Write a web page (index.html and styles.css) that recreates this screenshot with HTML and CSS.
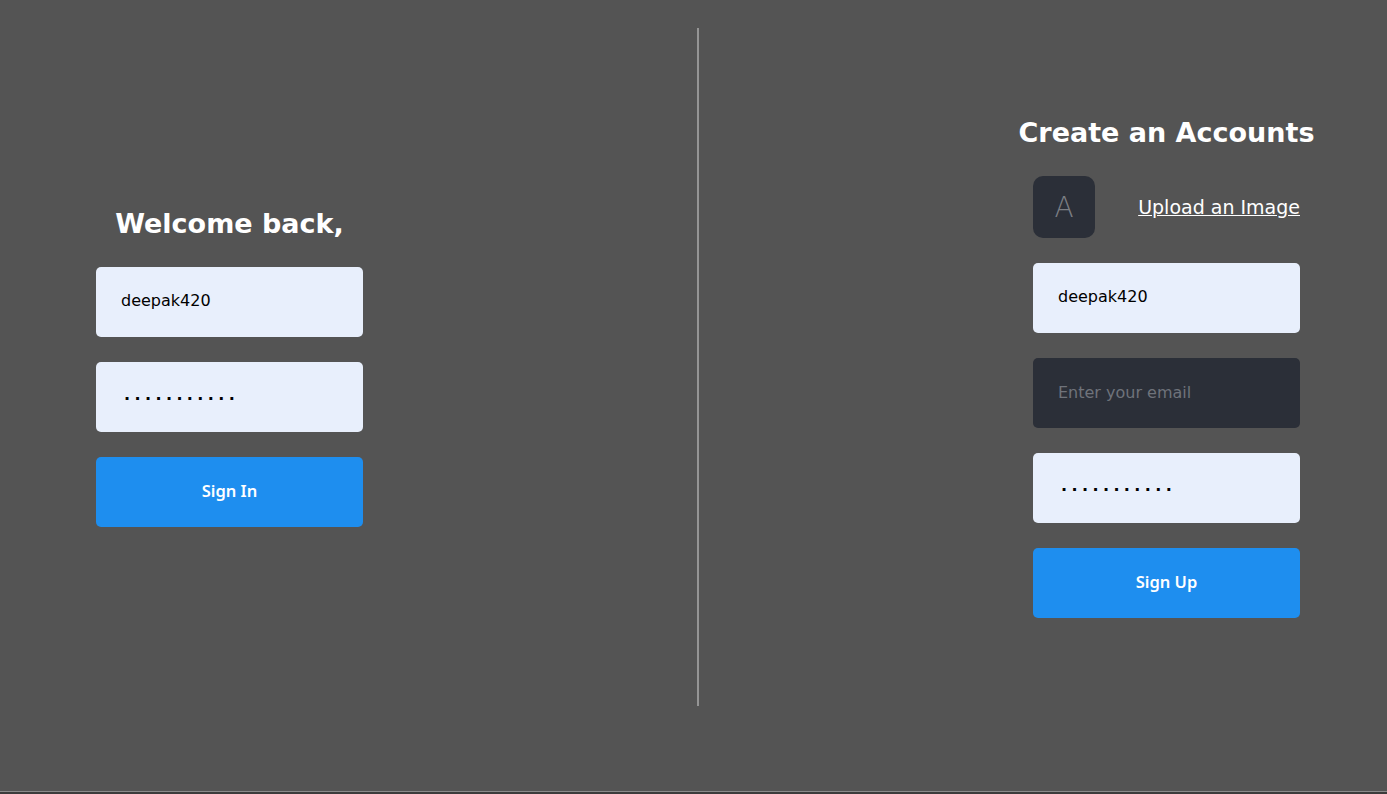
FILE: index.html
```html
<!DOCTYPE html>
<html lang="en">
<head>
<meta charset="utf-8">
<title>Auth</title>
<link rel="stylesheet" href="styles.css">
</head>
<body>
<main class="page">
  <section class="pane pane-left">
    <form class="form">
      <h1 class="title">Welcome back,</h1>
      <input class="field" type="text" value="deepak420">
      <input class="field field-pass" type="text" value="···········">
      <button class="btn" type="button">Sign In</button>
    </form>
  </section>
  <div class="divider"></div>
  <section class="pane pane-right">
    <form class="form">
      <h1 class="title">Create an Accounts</h1>
      <div class="avatar-row">
        <div class="avatar">A</div>
        <a class="upload" href="#">Upload an Image</a>
      </div>
      <input class="field" type="text" value="deepak420">
      <input class="field field-dark" type="text" placeholder="Enter your email">
      <input class="field field-pass" type="text" value="···········">
      <button class="btn" type="button">Sign Up</button>
    </form>
  </section>
</main>
<footer class="footer"></footer>
</body>
</html>
```
FILE: styles.css
```css
* { box-sizing: border-box; }
html, body { margin: 0; padding: 0; }
body {
  background: #545454;
  font-family: "DejaVu Sans", sans-serif;
  height: 794px;
  overflow: hidden;
}
.page {
  display: flex;
  align-items: stretch;
  height: 791px;
  padding: 28px 0 85px;
}
.pane {
  flex: 1;
  display: flex;
  align-items: center;
}
.pane-left { padding-left: 96px; }
.pane-right { justify-content: flex-end; padding-right: 87px; }
.divider {
  width: 2px;
  background: #959595;
}
.form {
  width: 267px;
  display: flex;
  flex-direction: column;
  gap: 25px;
}
.title {
  align-self: center;
  margin: 0 0 2px;
  font-size: 27px;
  font-weight: bold;
  color: #ffffff;
  text-align: center;
  line-height: 33px;
  white-space: nowrap;
}
.field {
  display: block;
  width: 100%;
  height: 70px;
  border: none;
  border-radius: 5px;
  background: #e8effc;
  padding: 0 25px 3px;
  font-family: "DejaVu Sans", sans-serif;
  font-size: 16px;
  color: #000;
  outline: none;
}
.field-pass {
  letter-spacing: 4.4px;
  padding: 3px 25px 0 28px;
  font-weight: bold;
}
.field-dark { background: #2b2f38; padding-bottom: 2px; }
.field-dark::placeholder { color: #6f737b; }
.btn {
  height: 70px;
  border: none;
  border-radius: 5px;
  background: #1e8eef;
  color: #fff;
  font-family: "Noto Sans", sans-serif;
  font-size: 16.5px;
  font-weight: 600;
  padding-bottom: 4px;
}
.avatar-row {
  display: flex;
  align-items: center;
  justify-content: space-between;
}
.avatar {
  width: 62px;
  height: 62px;
  border-radius: 10px;
  background: #2b2f38;
  color: #7b7e84;
  font-size: 28px;
  font-weight: 300;
  display: flex;
  align-items: center;
  justify-content: center;
}
.upload {
  color: #ffffff;
  font-size: 19px;
  text-decoration: underline;
}
.footer {
  height: 3px;
  border-top: 1px solid #8a8a8a;
  background: #3b3b3b;
}
```
